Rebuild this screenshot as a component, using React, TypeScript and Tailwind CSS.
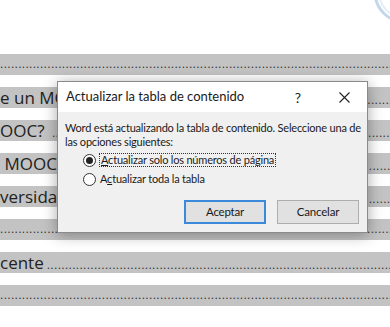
import React from "react";

const DOTS = ".".repeat(400);

const Band = ({ text }: { text?: string }) => (
  <div className="h-[21px] bg-[#c3c3c3] flex items-baseline overflow-hidden whitespace-pre">
    {text && (
      <span className="text-[17px] leading-[21px] text-[#222] font-['Open_Sans',sans-serif] pr-[3px]">
        {text}
      </span>
    )}
    <span className="flex-1 overflow-hidden text-[12px] leading-[21px] text-[#333] font-['Liberation_Sans',sans-serif] tracking-[0.3px]">
      {DOTS}
    </span>
  </div>
);

const Radio = ({ checked }: { checked?: boolean }) => (
  <span className="w-[13px] h-[13px] rounded-full border border-[#333] bg-white flex items-center justify-center shrink-0">
    {checked && <span className="w-[7px] h-[7px] rounded-full bg-[#222]" />}
  </span>
);

export default function App() {
  return (
    <div className="relative w-[390px] h-[327px] bg-white overflow-hidden">
      <svg className="absolute right-0 top-0" width="40" height="30" viewBox="0 0 40 30">
        <circle cx="55" cy="-8" r="30" stroke="#b4cde6" strokeWidth="3" fill="none" opacity="0.8" />
        <circle cx="55" cy="-8" r="26" stroke="#e3edf7" strokeWidth="2" fill="none" />
      </svg>

      <div className="pt-[54px] flex flex-col gap-[12px]">
        <Band />
        <Band text="e un MOOC?" />
        <Band text="OOC? " />
        <Band text=" MOOC?" />
        <Band text="versidad" />
        <Band />
        <Band text="cente" />
        <Band />
      </div>

      <div className="absolute left-[57px] top-[81px] w-[311px] h-[152px] border border-[#8a8a8a] bg-[#f0f0f0] shadow-[0_2px_14px_rgba(0,0,0,0.35)] flex flex-col font-['Lato',sans-serif] text-[#1a1a1a]">
        <div className="h-[30px] bg-white flex items-center pl-[8px] pr-[17px]">
          <span className="flex-1 text-[13px]">Actualizar la tabla de contenido</span>
          <span className="text-[14px] mr-[38px]">?</span>
          <svg width="11" height="11" viewBox="0 0 11 11">
            <path d="M0.5 0.5 L10.5 10.5 M10.5 0.5 L0.5 10.5" stroke="#222" strokeWidth="1.1" />
          </svg>
        </div>
        <div className="flex-1 px-[7px] pt-[9px] text-[11px] leading-[14px] tracking-[-0.2px]">
          <p className="whitespace-nowrap">
            Word está actualizando la tabla de contenido. Seleccione una de
            <br />
            las opciones siguientes:
          </p>
          <div className="mt-[4px] ml-[18px] flex flex-col gap-[5px]">
            <label className="flex items-center gap-[3px]">
              <Radio checked />
              <span className="border border-dotted border-[#333] px-[1px] leading-[11px] pb-[1px]">
                <u>A</u>ctualizar solo los números de página
              </span>
            </label>
            <label className="flex items-center gap-[4px]">
              <Radio />
              <span>
                A<u>c</u>tualizar toda la tabla
              </span>
            </label>
          </div>
          <div className="mt-[14px] flex justify-end gap-[11px] pr-[1px]">
            <button className="w-[82px] h-[24px] bg-[#e1e1e1] border-2 border-[#3b8ad9] text-[11.5px]">
              Aceptar
            </button>
            <button className="w-[82px] h-[24px] bg-[#e1e1e1] border border-[#adadad] text-[11.5px]">
              Cancelar
            </button>
          </div>
        </div>
      </div>
    </div>
  );
}
